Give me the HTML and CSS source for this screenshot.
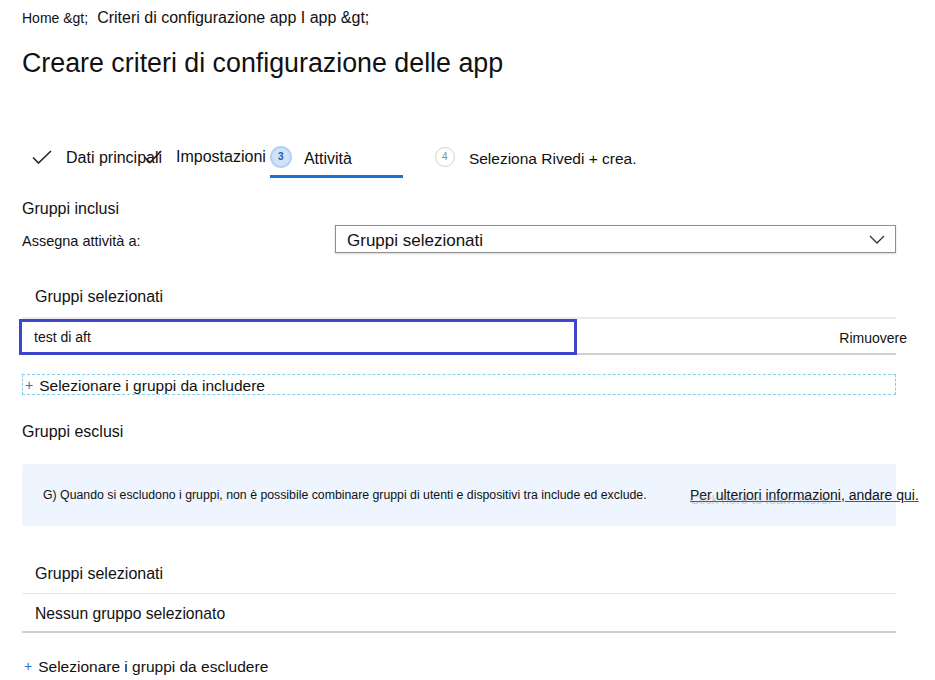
FILE: index.html
```html
<!DOCTYPE html>
<html lang="it">
<head>
<meta charset="utf-8">
<title>Creare criteri di configurazione delle app</title>
<link rel="stylesheet" href="styles.css">
</head>
<body>
<div class="page">
  <div class="crumb"><span>Home &amp;gt;</span><span class="crumb-b">Criteri di configurazione app I app &amp;gt;</span></div>
  <h1 class="title">Creare criteri di configurazione delle app</h1>

  <div class="stepper">
    <div class="step step1">
      <svg class="check" width="20" height="14" viewBox="0 0 20 14"><path d="M1 7.5 L6.5 13 L19 1" fill="none" stroke="#222" stroke-width="1.6"/></svg>
      <span>Dati principali</span>
    </div>
    <div class="step step2">
      <svg class="check small" width="18" height="14" viewBox="0 0 18 14"><path d="M1 7.5 L6 12.5 L17 1" fill="none" stroke="#222" stroke-width="1.6"/></svg>
      <span>Impostazioni</span>
    </div>
    <div class="step step3 active">
      <span class="num cur">3</span>
      <span>Attività</span>
    </div>
    <div class="step step4">
      <span class="num">4</span>
      <span>Seleziona Rivedi + crea.</span>
    </div>
  </div>

  <div class="label-lg inc">Gruppi inclusi</div>
  <div class="assign">
    <span class="assign-label">Assegna attività a:</span>
    <div class="select">
      <span class="select-value">Gruppi selezionati</span>
      <svg width="16" height="9" viewBox="0 0 16 9"><path d="M1 1 L8 8 L15 1" fill="none" stroke="#333" stroke-width="1.3"/></svg>
    </div>
  </div>

  <div class="sub-head">Gruppi selezionati</div>
  <div class="group-row">
    <div class="group-name">test di aft</div>
    <div class="group-action"><span class="remove">Rimuovere</span></div>
  </div>
  <div class="add-link dashed"><span class="plus">+</span><span>Selezionare i gruppi da includere</span></div>

  <div class="label-lg exc">Gruppi esclusi</div>
  <div class="info">
    <span class="info-text">G) Quando si escludono i gruppi, non è possibile combinare gruppi di utenti e dispositivi tra include ed exclude.</span>
    <span class="info-link"><span class="ghost">Click here to learn more.</span>Per ulteriori informazioni, andare qui.</span>
  </div>

  <div class="sub-head sub2">Gruppi selezionati</div>
  <div class="empty-row">Nessun gruppo selezionato</div>
  <div class="add-link exc-link"><span class="plus">+</span><span>Selezionare i gruppi da escludere</span></div>
</div>
</body>
</html>
```

FILE: styles.css
```css
* { box-sizing: border-box; }
body {
  margin: 0;
  background: #fff;
  color: #111;
  font-family: "Liberation Sans", Arial, sans-serif;
}
.page {
  padding: 0 39px 0 22px;
  width: 935px;
}
.crumb {
  padding-top: 8px;
  font-size: 14px;
  line-height: 20px;
  height: 28px;
  display: flex;
  align-items: baseline;
  gap: 9px;
}
.crumb-b { font-size: 16px; }
.title {
  margin: 19px 0 0;
  font-size: 26.8px;
  font-weight: normal;
  line-height: 32px;
  height: 32px;
}
.stepper {
  margin-top: 59px;
  display: flex;
  height: 40px;
  font-size: 16px;
}
.step {
  display: flex;
  align-items: center;
  height: 40px;
  border-bottom: 3px solid transparent;
  white-space: nowrap;
}
.step1 { padding-left: 10px; gap: 14px; }
.step1 span { margin-top: 2px; }
.step2 { margin-left: -18px; gap: 14px; }
.step3 { margin-left: 4px; width: 133px; flex: none; gap: 12px; }
.step4 { margin-left: 32px; gap: 14px; font-size: 15.5px; }
.active { border-bottom-color: #1a73d4; }
.num {
  width: 22px;
  height: 22px;
  border-radius: 50%;
  border: 1px solid #d2d2d2;
  display: flex;
  align-items: center;
  justify-content: center;
  font-size: 10px;
  color: #888;
  background: #fff;
}
.num.cur {
  background: #cfe2f8;
  border: 2px solid #b4d0f2;
  color: #1b5fa8;
  font-weight: bold;
}
.step4 .num { width: 20px; height: 20px; }
.step3 span:last-child { margin-top: 5px; }
.step4 span:last-child { margin-top: 5px; }

.label-lg {
  font-size: 16px;
  line-height: 20px;
}
.inc { margin-top: 21px; }
.assign {
  margin-top: 6px;
  display: flex;
  align-items: center;
  height: 28px;
}
.assign-label {
  width: 313px;
  font-size: 14.5px;
  padding-top: 4px;
}
.select {
  flex: 1;
  height: 28px;
  border: 1px solid #8e8e8e;
  box-shadow: 0 1px 2px rgba(0,0,0,0.15);
  display: flex;
  align-items: center;
  justify-content: space-between;
  padding: 0 10px 0 11px;
  font-size: 17px;
}
.select-value { padding-top: 4px; }
.sub-head {
  margin-top: 34px;
  padding-left: 13px;
  font-size: 16px;
  line-height: 20px;
}
.group-row {
  margin-top: 10px;
  border-top: 2px solid #ececec;
  display: flex;
  align-items: stretch;
  height: 38px;
}
.group-name {
  width: 558px;
  margin-left: -3px;
  border: 3px solid #3d45cb;
  display: flex;
  align-items: center;
  padding-left: 12px;
  font-size: 14px;
}
.group-action {
  flex: 1;
  border-bottom: 2px solid #cfcfcf;
  display: flex;
  align-items: center;
  justify-content: flex-end;
  padding-top: 3px;
  font-size: 14px;
}
.remove { margin-right: -11px; white-space: nowrap; }
.add-link {
  display: flex;
  align-items: center;
  gap: 6px;
  font-size: 15.5px;
  height: 21px;
}
.add-link span:last-child { padding-top: 2px; }
.plus { color: #2676d0; font-size: 14px; padding-left: 2px; }
.dashed {
  margin-top: 19px;
  border: 1px dashed #7fd0ea;
}
.exc { margin-top: 27px; }
.info {
  margin-top: 22px;
  height: 62px;
  background: #eef5fe;
  display: flex;
  align-items: center;
  padding-left: 21px;
  border-radius: 2px;
}
.info-text {
  font-size: 12.3px;
  width: 647px;
  flex: none;
  white-space: nowrap;
}
.info-link {
  font-size: 14px;
  white-space: nowrap;
  position: relative;
  text-decoration: underline;
  text-decoration-color: #555;
}
.ghost {
  position: absolute;
  left: 0;
  top: 5px;
  font-size: 13px;
  color: #8a8a8a;
  opacity: 0.4;
}
.sub2 { margin-top: 38px; }
.empty-row {
  margin-top: 9px;
  border-top: 1px solid #e6e6e6;
  border-bottom: 2px solid #cfcfcf;
  height: 40px;
  display: flex;
  align-items: center;
  padding-left: 13px;
  padding-top: 2px;
  font-size: 15.7px;
}
.exc-link { margin-top: 22px; }
```
